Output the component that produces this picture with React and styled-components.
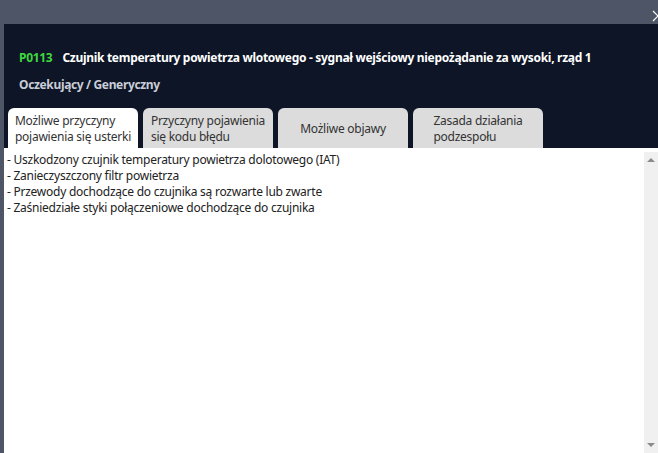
import React, { useState } from "react";
import styled, { createGlobalStyle } from "styled-components";

const Global = createGlobalStyle`
  html, body { margin: 0; padding: 0; height: 100%; }
  body { background: #4e5566; overflow: hidden; font-family: "Segoe UI", "Noto Sans", "Open Sans", sans-serif; }
  #root { height: 100%; }
`;

const Screen = styled.div`
  width: 658px;
  height: 453px;
  display: flex;
  flex-direction: column;
  background: #4e5566;
  position: relative;
  overflow: hidden;
`;

const TopBar = styled.div`
  height: 24px;
  flex: none;
`;

const CloseBtn = styled.div`
  position: absolute;
  top: 5px;
  right: -6px;
  width: 12px;
  height: 12px;
`;

const Panel = styled.div`
  flex: 1;
  margin-left: 4px;
  background: #0d1526;
  display: flex;
  flex-direction: column;
  min-height: 0;
`;

const Header = styled.div`
  padding: 24px 0 0 15px;
  display: flex;
  flex-direction: column;
  gap: 8px;
`;

const Title = styled.div`
  font-size: 12px;
  font-weight: 700;
  color: #ffffff;
  line-height: 19px;
  white-space: nowrap;
  letter-spacing: -0.3px;
`;

const Code = styled.span`
  color: #3fd83f;
  margin-right: 10px;
`;

const Subtitle = styled.div`
  font-size: 12px;
  font-weight: 700;
  color: #c9ced8;
  line-height: 19px;
  letter-spacing: -0.35px;
`;

const Tabs = styled.div`
  display: flex;
  gap: 5px;
  padding: 14px 0 0 4px;
`;

const Tab = styled.button`
  width: 130px;
  height: 40px;
  border: none;
  border-radius: 6px 6px 0 0;
  background: ${(p) => (p.$active ? "#ffffff" : "#dcdcdc")};
  color: #333333;
  font-family: inherit;
  font-size: 12px;
  line-height: 16px;
  letter-spacing: -0.25px;
  text-align: left;
  white-space: nowrap;
  display: flex;
  align-items: center;
  justify-content: center;
  padding: 0;
  cursor: pointer;
`;

const TabLabel = styled.span`
  display: block;
  padding-top: 1px;
`;

const Content = styled.div`
  flex: 1;
  background: #ffffff;
  display: flex;
  min-height: 0;
`;

const List = styled.div`
  flex: 1;
  padding: 4px 3px;
  font-size: 12px;
  line-height: 16px;
  letter-spacing: -0.25px;
  color: #222222;
`;

const Scrollbar = styled.div`
  width: 14px;
  margin-top: 4px;
  background: #f0f0f0;
  display: flex;
  flex-direction: column;
  justify-content: space-between;
  align-items: center;
  padding: 6px 0 6px;
`;

const Arrow = styled.div`
  width: 0;
  height: 0;
  border-left: 4px solid transparent;
  border-right: 4px solid transparent;
  ${(p) =>
    p.$down
      ? "border-top: 4px solid #8a8a8a;"
      : "border-bottom: 4px solid #8a8a8a;"}
`;

const tabs = [
  ["Możliwe przyczyny", "pojawienia się usterki"],
  ["Przyczyny pojawienia", "się kodu błędu"],
  ["Możliwe objawy"],
  ["Zasada działania", "podzespołu"],
];

const items = [
  "- Uszkodzony czujnik temperatury powietrza dolotowego (IAT)",
  "- Zanieczyszczony filtr powietrza",
  "- Przewody dochodzące do czujnika są rozwarte lub zwarte",
  "- Zaśniedziałe styki połączeniowe dochodzące do czujnika",
];

export default function App() {
  const [active, setActive] = useState(0);
  return (
    <>
      <Global />
      <Screen>
        <TopBar />
        <CloseBtn>
          <svg width="12" height="12" viewBox="0 0 12 12">
            <path d="M1 1 L11 11 M11 1 L1 11" stroke="#ffffff" strokeWidth="1.2" fill="none" />
          </svg>
        </CloseBtn>
        <Panel>
          <Header>
            <Title>
              <Code>P0113</Code>
              Czujnik temperatury powietrza wlotowego - sygnał wejściowy niepożądanie za wysoki, rząd 1
            </Title>
            <Subtitle>Oczekujący / Generyczny</Subtitle>
          </Header>
          <Tabs>
            {tabs.map((lines, i) => (
              <Tab key={i} $active={i === active} onClick={() => setActive(i)}>
                <TabLabel>
                  {lines.map((l, j) => (
                    <React.Fragment key={j}>
                      {j > 0 && <br />}
                      {l}
                    </React.Fragment>
                  ))}
                </TabLabel>
              </Tab>
            ))}
          </Tabs>
          <Content>
            <List>
              {items.map((t) => (
                <div key={t}>{t}</div>
              ))}
            </List>
            <Scrollbar>
              <Arrow />
              <Arrow $down />
            </Scrollbar>
          </Content>
        </Panel>
      </Screen>
    </>
  );
}
